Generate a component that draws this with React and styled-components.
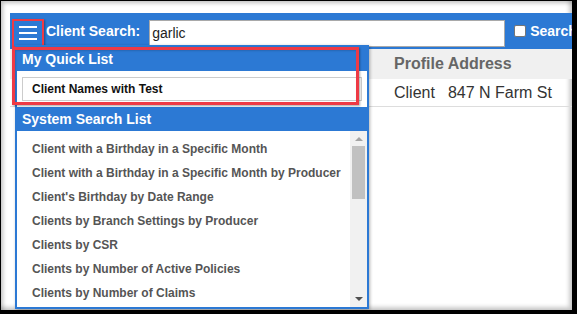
import React from "react";
import styled, { createGlobalStyle } from "styled-components";

const Global = createGlobalStyle`
  html, body { margin: 0; padding: 0; background: #000; }
  body { font-family: "Liberation Sans", Arial, sans-serif; width: 577px; height: 314px; overflow: hidden; }
  * { box-sizing: border-box; }
`;

const BLUE = "#2c79d4";
const RED = "#ee3a45";

const Screen = styled.div`
  position: relative;
  margin: 1px 0 0 1px;
  width: 571px;
  height: 309px;
  background: #fff;
  box-shadow: inset 2px 2px 4px rgba(0, 0, 0, 0.25), inset -3px -3px 4px rgba(0, 0, 0, 0.2);
  padding: 12px 0 0 9px;
  overflow: hidden;
`;

const TopBar = styled.div`
  height: 36px;
  background: ${BLUE};
  display: flex;
  align-items: center;
  padding-left: 2px;
  overflow: hidden;
`;

const MenuButton = styled.button`
  flex: none;
  width: 32px;
  height: 29px;
  margin-top: 4px;
  border: 2px solid ${RED};
  background: ${BLUE};
  padding: 0;
  display: flex;
  align-items: center;
  justify-content: center;
  box-shadow: 1px 1px 2px rgba(0, 0, 0, 0.35);
`;

const Label = styled.span`
  flex: none;
  color: #fff;
  font-weight: bold;
  font-size: 14px;
  margin-left: ${(p) => p.$ml || 0}px;
  white-space: nowrap;
`;

const SearchInput = styled.div`
  flex: none;
  width: 356px;
  height: 27px;
  margin-left: 9px;
  margin-top: 4px;
  background: #fff;
  border: 1px solid #a9a9a9;
  font-size: 14px;
  color: #222;
  display: flex;
  align-items: center;
  padding-left: 2px;
`;

const Check = styled.span`
  flex: none;
  width: 12px;
  height: 12px;
  margin-left: 9px;
  background: #fff;
  border: 1px solid #767676;
  border-radius: 2px;
`;

const Table = styled.div`
  display: grid;
  grid-template-columns: 375px 1fr;
`;

const HeadCell = styled.div`
  height: 30px;
  background: #f0f0f0;
  color: #666;
  font-weight: bold;
  font-size: 16px;
  display: flex;
  align-items: center;
  padding-left: ${(p) => p.$pl || 0}px;
`;

const BodyCell = styled.div`
  height: 28px;
  border-bottom: 1px solid #ddd;
  color: #333;
  font-size: 16px;
  display: flex;
  align-items: center;
  gap: 13px;
  padding-left: ${(p) => p.$pl || 0}px;
  white-space: nowrap;
`;

const Panel = styled.div`
  position: absolute;
  left: 14px;
  top: 44px;
  width: 354px;
  height: 264px;
  border: 2px solid ${BLUE};
  background: #fff;
  display: flex;
  flex-direction: column;
  box-shadow: 1px 1px 3px rgba(0, 0, 0, 0.3);
`;

const SectionHead = styled.div`
  height: 24px;
  flex: none;
  background: ${BLUE};
  color: #fff;
  font-weight: bold;
  font-size: 14px;
  display: flex;
  align-items: center;
  padding-left: 5px;
`;

const QuickBody = styled.div`
  padding: 6px 5px 6px 5px;
  flex: none;
`;

const QuickItem = styled.div`
  height: 24px;
  border: 1px solid #ccc;
  font-weight: bold;
  font-size: 12px;
  color: #111;
  display: flex;
  align-items: center;
  padding-left: 9px;
`;

const ListWrap = styled.div`
  flex: 1;
  display: flex;
  min-height: 0;
`;

const List = styled.div`
  flex: 1;
  padding-top: 6px;
  overflow: hidden;
`;

const ListItem = styled.div`
  height: 24px;
  display: flex;
  align-items: center;
  padding-left: 15px;
  font-weight: bold;
  font-size: 12px;
  color: #555;
  white-space: nowrap;
`;

const ScrollBar = styled.div`
  width: 17px;
  flex: none;
  background: #f1f1f1;
  display: flex;
  flex-direction: column;
  align-items: center;
`;

const Arrow = styled.div`
  width: 0;
  height: 0;
  border-left: 4px solid transparent;
  border-right: 4px solid transparent;
  ${(p) =>
    p.$down
      ? `border-top: 4px solid #505050; margin-top: auto; margin-bottom: 6px;`
      : `border-bottom: 4px solid #a3a3a3; margin-top: 6px;`}
`;

const Thumb = styled.div`
  width: 13px;
  height: 53px;
  margin-top: 5px;
  background: #c1c1c1;
`;

const Annotation = styled.div`
  position: absolute;
  left: 11px;
  top: 46px;
  width: 347px;
  height: 58px;
  border: 3px solid ${RED};
  box-shadow: 1px 1px 2px rgba(0, 0, 0, 0.35), inset 1px 1px 2px rgba(0, 0, 0, 0.15);
  pointer-events: none;
`;

const Burger = () => (
  <svg width="18" height="14" viewBox="0 0 18 14">
    <rect x="0" y="0" width="18" height="2" fill="#fff" />
    <rect x="0" y="6" width="18" height="2" fill="#fff" />
    <rect x="0" y="12" width="18" height="2" fill="#fff" />
  </svg>
);

const items = [
  "Client with a Birthday in a Specific Month",
  "Client with a Birthday in a Specific Month by Producer",
  "Client's Birthday by Date Range",
  "Clients by Branch Settings by Producer",
  "Clients by CSR",
  "Clients by Number of Active Policies",
  "Clients by Number of Claims",
];

export default function App() {
  return (
    <>
      <Global />
      <Screen>
        <TopBar>
          <MenuButton aria-label="menu">
            <Burger />
          </MenuButton>
          <Label $ml={2}>Client Search:</Label>
          <SearchInput>garlic</SearchInput>
          <Check />
          <Label $ml={4}>Search</Label>
        </TopBar>
        <Table>
          <HeadCell />
          <HeadCell $pl={9}>Profile Address</HeadCell>
          <BodyCell />
          <BodyCell $pl={9}>
            <span>Client</span>
            <span>847 N Farm St</span>
          </BodyCell>
        </Table>
        <Panel>
          <SectionHead>My Quick List</SectionHead>
          <QuickBody>
            <QuickItem>Client Names with Test</QuickItem>
          </QuickBody>
          <SectionHead>System Search List</SectionHead>
          <ListWrap>
            <List>
              {items.map((t) => (
                <ListItem key={t}>{t}</ListItem>
              ))}
            </List>
            <ScrollBar>
              <Arrow />
              <Thumb />
              <Arrow $down />
            </ScrollBar>
          </ListWrap>
        </Panel>
        <Annotation />
      </Screen>
    </>
  );
}
